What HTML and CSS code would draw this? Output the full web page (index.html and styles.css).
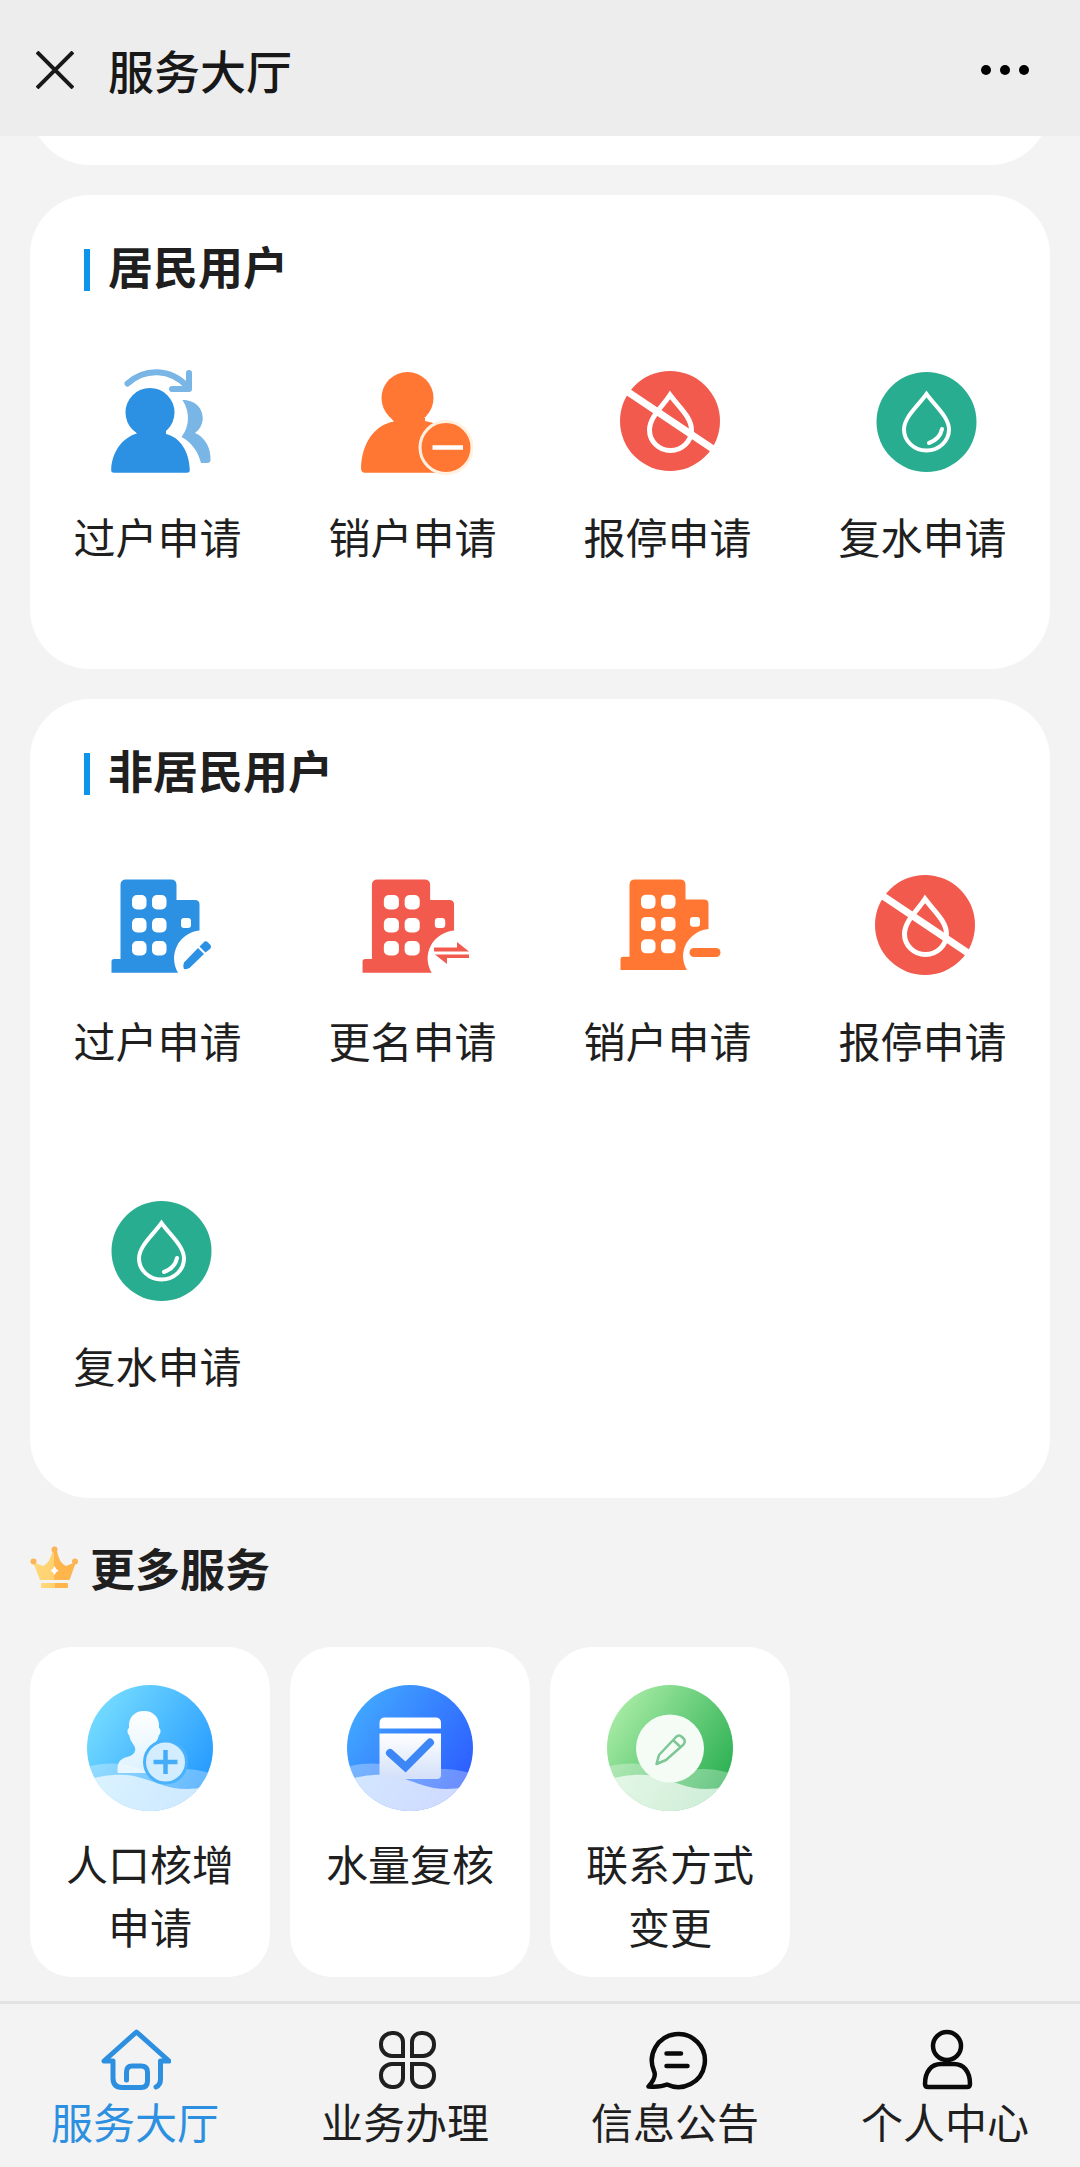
FILE: index.html
```html
<!DOCTYPE html>
<html lang="zh-CN">
<head>
<meta charset="utf-8">
<meta name="viewport" content="width=device-width, initial-scale=1">
<title>服务大厅</title>
<link rel="stylesheet" href="styles.css">
</head>
<body>
<svg class="defs" width="0" height="0" aria-hidden="true">
  <defs>
    <linearGradient id="sky" x1="0.1" y1="0.1" x2="1" y2="0.7"><stop offset="0" stop-color="#75dcff"/><stop offset="1" stop-color="#259aff"/></linearGradient>
    <linearGradient id="royal" x1="0.1" y1="0.1" x2="1" y2="0.7"><stop offset="0" stop-color="#42a8ff"/><stop offset="1" stop-color="#2c5dff"/></linearGradient>
    <linearGradient id="leaf" x1="0.1" y1="0.1" x2="1" y2="0.7"><stop offset="0" stop-color="#a9eca6"/><stop offset="1" stop-color="#2bb052"/></linearGradient>
    <linearGradient id="paper" x1="0" y1="0" x2="0" y2="1"><stop offset="0" stop-color="#fff"/><stop offset="1" stop-color="#fff" stop-opacity="0.8"/></linearGradient>
    <linearGradient id="sheet" x1="0" y1="0" x2="0" y2="1"><stop offset="0" stop-color="#fff"/><stop offset="1" stop-color="#d3e0fa"/></linearGradient>
    <linearGradient id="gold" x1="0" y1="0" x2="1" y2="0"><stop offset="0" stop-color="#ffd978"/><stop offset="0.500" stop-color="#ffd070"/><stop offset="0.500" stop-color="#fdb54c"/><stop offset="1" stop-color="#fdb54c"/></linearGradient>
    <clipPath id="disc"><circle cx="64" cy="65" r="63"/></clipPath>
    <symbol id="waves" viewBox="0 0 128 128">
      <g clip-path="url(#disc)" fill="#fff">
        <path fill-opacity="0.3" d="M0 84C14 80 32 79 46 83C58 87 66 90 78 88C92 85 106 85 128 91V128H0Z"/>
        <path fill-opacity="0.68" d="M0 97C14 93 32 90 48 93C64 97 74 102 88 105C100 107 112 106 128 102V128H0Z"/>
      </g>
    </symbol>
    <symbol id="building" viewBox="0 0 120 120">
      <path fill="currentColor" fill-rule="evenodd" d="M22.500 93V19Q22.500 13.500 28 13.500H73Q78.500 13.500 78.500 19V34H97Q101.500 34 101.500 38.500V64.500A28 28 0 0 0 80 106.700H13.500V95.500Q13.500 93 16 93Z"/>
      <g fill="#fff">
        <rect x="34" y="29" width="14.500" height="14.500" rx="5"/><rect x="54" y="29" width="14.500" height="14.500" rx="5"/>
        <rect x="34" y="52" width="14.500" height="14.500" rx="5"/><rect x="54" y="52" width="14.500" height="14.500" rx="5"/>
        <rect x="34" y="75" width="14.500" height="14.500" rx="5"/><rect x="54" y="75" width="14.500" height="14.500" rx="5"/>
        <rect x="83" y="52" width="10" height="10" rx="3"/>
      </g>
    </symbol>
    <symbol id="drop-off" viewBox="0 0 120 120">
      <circle cx="62" cy="59" r="50" fill="#f15a4d"/>
      <path d="M62 33C55 44 41.500 55 41.500 68A21 20.500 0 0 0 83.500 68C83.500 55 70 44 62 33Z" fill="none" stroke="#fff" stroke-width="5"/>
      <path d="M17 28L108 89" stroke="#fff" stroke-width="7"/>
    </symbol>
    <symbol id="drop-on" viewBox="0 0 120 120">
      <circle cx="63.500" cy="60" r="50" fill="#28ad90"/>
      <path d="M63.500 32C55 44 41 55 41 67.500A22.500 21 0 0 0 86 67.500C86 55 72 44 63.500 32Z" fill="none" stroke="#fff" stroke-width="4"/>
      <path d="M79 67Q77 77 66 81" fill="none" stroke="#fff" stroke-width="4" stroke-linecap="round"/>
    </symbol>
  </defs>
</svg>

<header class="topbar">
  <button class="icon-button" type="button" aria-label="关闭">
    <svg width="38" height="38" viewBox="0 0 38 38"><path d="M1 1L37 37M37 1L1 37" stroke="#181818" stroke-width="4"/></svg>
  </button>
  <h1 class="topbar-title">服务大厅</h1>
  <button class="icon-button icon-button-end" type="button" aria-label="更多">
    <svg width="50" height="12" viewBox="0 0 50 12"><circle cx="6" cy="6" r="5"/><circle cx="25" cy="6" r="5"/><circle cx="44" cy="6" r="5"/></svg>
  </button>
</header>

<main class="content">
  <div class="card card-scrolled"></div>

  <section class="card">
    <h2 class="card-title">居民用户</h2>
    <div class="entries">
      <a class="entry" href="#">
        <svg class="entry-icon" viewBox="0 0 120 120">
          <g fill="#2c91e3"><circle cx="52" cy="50.500" r="24.500"/><path d="M37 68H68V72C82 75 91.500 90 91.800 108Q91.800 110.700 89 110.700H16Q13 110.700 13.200 108C13.500 90 25 75 39 71.500Z"/></g>
          <path fill="#79b5e5" d="M84.500 38C96 38 105 45 104.800 57Q104 66 97 71C107 75 113 86 112.500 98Q112.500 101 109 101H103C100 89 93 80 83.500 75C92 64 92 50 84.500 38Z"/>
          <path fill="none" stroke="#79b5e5" stroke-width="6" stroke-linecap="round" stroke-linejoin="round" d="M29.500 21.500C47 6 72 6 90 25M91 11V27H74"/>
        </svg>
        <span>过户申请</span>
      </a>
      <a class="entry" href="#">
        <svg class="entry-icon" viewBox="0 0 120 120">
          <g fill="#ff7733"><circle cx="54.500" cy="36" r="26"/><path d="M38 56H72V59Q79 60 84 63L92 110.700H12Q8 110.700 8 106C9 80 22 63 41 59.500Z"/></g>
          <circle cx="93" cy="85.500" r="26" fill="#ff7733" stroke="#fff0e0" stroke-width="3"/>
          <path d="M79.500 85.500H110" stroke="#fff" stroke-width="4.500"/>
        </svg>
        <span>销户申请</span>
      </a>
      <a class="entry" href="#">
        <svg class="entry-icon" viewBox="0 0 120 120"><use href="#drop-off"/></svg>
        <span>报停申请</span>
      </a>
      <a class="entry" href="#">
        <svg class="entry-icon" viewBox="0 0 120 120"><use href="#drop-on"/></svg>
        <span>复水申请</span>
      </a>
    </div>
  </section>

  <section class="card">
    <h2 class="card-title">非居民用户</h2>
    <div class="entries">
      <a class="entry" href="#">
        <svg class="entry-icon building-blue" viewBox="0 0 120 120">
          <use href="#building"/>
          <path fill="currentColor" d="M100 82L106 88L91.500 102Q89 103.500 86 103Q84.500 100 86 96.500ZM101.500 80.500L106.500 75.500Q109 74.500 110.500 77L112.500 79Q114 81 112 83L107.500 86.500Z"/>
        </svg>
        <span>过户申请</span>
      </a>
      <a class="entry" href="#">
        <svg class="entry-icon building-red" viewBox="0 0 120 120">
          <use href="#building" transform="translate(-4.500 0) scale(1.040 1)"/>
          <path fill="currentColor" d="M81 81.500H104V76L116 85.500H81ZM116 92H94V98L82 88.500H116Z"/>
        </svg>
        <span>更名申请</span>
      </a>
      <a class="entry" href="#">
        <svg class="entry-icon building-orange" viewBox="0 0 120 120">
          <use href="#building" transform="translate(-1 0.500) scale(1 0.970)"/>
          <path d="M86 86.500H108" stroke="currentColor" stroke-width="9" stroke-linecap="round"/>
        </svg>
        <span>销户申请</span>
      </a>
      <a class="entry" href="#">
        <svg class="entry-icon" viewBox="0 0 120 120"><use href="#drop-off"/></svg>
        <span>报停申请</span>
      </a>
      <a class="entry" href="#">
        <svg class="entry-icon" viewBox="0 0 120 120"><use href="#drop-on"/></svg>
        <span>复水申请</span>
      </a>
    </div>
  </section>

  <section class="more">
    <h2 class="more-title">
      <svg width="48" height="44" viewBox="0 0 48 44">
        <path fill="url(#gold)" d="M3 16L13 20Q20 17 22.500 5H27Q29 17 36 20L46 16L39.500 34H10Z"/>
        <g fill="#fbb456"><circle cx="3.500" cy="15.500" r="3"/><circle cx="24.500" cy="3.500" r="3"/><circle cx="45" cy="15.500" r="3"/></g>
        <path fill="#fff" d="M24.500 20Q25.500 23 28.500 24.500Q25.500 26 24.500 29Q23.500 26 20.500 24.500Q23.500 23 24.500 20Z"/>
        <rect x="11" y="37" width="27" height="5" rx="1" fill="url(#gold)"/>
      </svg>
      更多服务
    </h2>
    <div class="services">
      <a class="service" href="#">
        <svg class="service-icon" viewBox="0 0 128 128">
          <circle cx="64" cy="65" r="63" fill="url(#sky)"/>
          <use href="#waves"/>
          <path fill="url(#paper)" d="M43 45C42 34 49 28 58 28S74 34 73 45C75 46 75 50 73 52Q71 60 66 62V90H33Q31 90 31.500 87C31.500 79 34 76 41 74Q48 72 49 68Q50 65 47 61Q44 57 43 52C41 50 41 46 43 45Z"/>
          <circle cx="79.500" cy="79" r="21" fill="#d2edff" stroke="#49b2fa" stroke-width="3"/>
          <path d="M67.500 79H91.500M79.500 67V91" stroke="#45adf8" stroke-width="4.500"/>
        </svg>
        <span>人口核增申请</span>
      </a>
      <a class="service" href="#">
        <svg class="service-icon" viewBox="0 0 128 128">
          <circle cx="64" cy="65" r="63" fill="url(#royal)"/>
          <use href="#waves"/>
          <path fill="#fff" d="M33.500 45.500V40Q33.500 34.500 39 34.500H89.500Q95 34.500 95 40V45.500Z"/>
          <path fill="url(#sheet)" d="M33.500 50.500H95V92Q95 96 91 96H37.500Q33.500 96 33.500 92Z"/>
          <path d="M44 70L59.500 84L84 59.500" fill="none" stroke="#3c86f5" stroke-width="8" stroke-linecap="round"/>
        </svg>
        <span>水量复核</span>
      </a>
      <a class="service" href="#">
        <svg class="service-icon" viewBox="0 0 128 128">
          <circle cx="64" cy="65" r="63" fill="url(#leaf)"/>
          <use href="#waves"/>
          <circle cx="64" cy="65.500" r="34" fill="#f5fcf6"/>
          <path fill="none" stroke="#7cc795" stroke-width="2.500" stroke-linejoin="round" d="M50.500 81L53 72L70 54Q73 51 76 54L78 56Q80 59 77 62L60 77ZM67 57L74.500 64"/>
        </svg>
        <span>联系方式变更</span>
      </a>
    </div>
  </section>
</main>

<nav class="tabbar">
  <a class="tab tab-active" href="#" aria-current="page">
    <svg class="tab-icon" viewBox="0 0 72 64" stroke-width="5"><path d="M14 34H5L37.500 5L70 34H61.500V52Q61.500 58 57 60M14 34V51Q14 60.500 23 60.500H42Q48.500 60.500 48.500 54V45Q48.500 39 42 39H33Q27.500 39 27.500 45V53"/></svg>
    <span>服务大厅</span>
  </a>
  <a class="tab" href="#">
    <svg class="tab-icon" viewBox="0 0 72 64" stroke-width="4"><path stroke-linejoin="miter" d="M34 29H23A11 11 0 0 1 12 18V17A11 11 0 0 1 23 6H25A9 9 0 0 1 34 15ZM43 29H54A11 11 0 0 0 65 18V17A11 11 0 0 0 54 6H52A9 9 0 0 0 43 15ZM34 37H23A11 11 0 0 0 12 48V49A11 11 0 0 0 23 60H25A9 9 0 0 0 34 51ZM43 37H54A11 11 0 0 1 65 48V49A11 11 0 0 1 54 60H52A9 9 0 0 1 43 51Z"/></svg>
    <span>业务办理</span>
  </a>
  <a class="tab" href="#">
    <svg class="tab-icon tab-icon-dark" viewBox="0 0 72 64" stroke-width="4.500"><path d="M9.500 59.500Q18 50 15 44A26.500 26.500 0 1 1 28 57.500Q21 60.500 9.500 59.500ZM27.500 26.500H42M27.500 39H48.500"/></svg>
    <span>信息公告</span>
  </a>
  <a class="tab" href="#">
    <svg class="tab-icon tab-icon-dark" viewBox="0 0 72 64" stroke-width="4.500"><circle cx="38" cy="19" r="14"/><path d="M19 60H58Q61 60 61 57C61 45 55 37 45 37H32C22 37 16 45 16 57Q16 60 19 60Z"/></svg>
    <span>个人中心</span>
  </a>
</nav>
</body>
</html>
```

FILE: styles.css
```css
* {
  box-sizing: border-box;
}

body {
  display: flex;
  flex-direction: column;
  min-height: 100vh;
  margin: 0;
  background: #f3f3f3;
  color: #1f1f1f;
  font-family: "Noto Sans CJK SC", "Noto Sans", sans-serif;
  font-size: 42px;
  line-height: 63px;
}

a {
  color: inherit;
  text-decoration: none;
}

h1,
h2 {
  margin: 0;
}

svg {
  display: block;
  flex: none;
}

.defs {
  position: absolute;
}

.topbar {
  display: flex;
  align-items: center;
  height: 136px;
  padding: 4px 50px 0 36px;
  background: #ededed;
}

.icon-button {
  padding: 0;
  border: 0;
  background: none;
}

.icon-button-end {
  margin-left: auto;
}

.topbar-title {
  margin-left: 34px;
  padding-bottom: 2px;
  color: #181818;
  font-size: 46px;
  font-weight: 500;
}

.content {
  flex: 1;
  padding: 0 30px 24px;
  overflow: hidden;
}

.card {
  margin-bottom: 30px;
  border-radius: 60px;
  background: #fff;
  overflow: hidden;
}

.card-scrolled {
  height: 130px;
  margin-top: -101px;
}

.card-title {
  display: flex;
  align-items: flex-end;
  gap: 18px;
  padding: 41px 54px 0;
  font-size: 45px;
  line-height: 60px;
}

.card-title::before {
  width: 6px;
  height: 42px;
  margin-bottom: 5px;
  background: #0d95ec;
  content: "";
}

.entries {
  display: grid;
  grid-template-columns: repeat(4, 1fr);
  margin-top: 48px;
}

.entry {
  display: flex;
  flex-direction: column;
  align-items: center;
  gap: 22px;
  padding: 18px 0 102px;
}

.entry-icon {
  width: 120px;
  height: 120px;
}

.building-blue {
  color: #2c91e3;
}

.building-red {
  color: #f15a4d;
}

.building-orange {
  color: #ff7733;
}

.more-title {
  display: flex;
  align-items: center;
  gap: 12px;
  margin-top: 40px;
  font-size: 45px;
  line-height: 60px;
}

.services {
  display: grid;
  grid-template-columns: repeat(4, 1fr);
  gap: 20px;
  margin-top: 49px;
}

.service {
  display: flex;
  flex-direction: column;
  align-items: center;
  gap: 20px;
  padding: 36px 30px 20px;
  border-radius: 42px;
  background: #fff;
  text-align: center;
}

.service-icon {
  width: 128px;
  height: 128px;
}

.tabbar {
  display: grid;
  grid-template-columns: repeat(4, 1fr);
  border-top: 3px solid #e3e3e3;
  line-height: 56px;
}

.tab {
  display: flex;
  flex-direction: column;
  align-items: center;
  gap: 2px;
  padding: 23px 0 18px;
}

.tab-active {
  color: #2c8fe0;
}

.tab-icon {
  width: 72px;
  height: 64px;
  fill: none;
  stroke: currentColor;
  stroke-linecap: round;
  stroke-linejoin: round;
}

.tab-icon-dark {
  stroke: #0a0a0a;
}
```
